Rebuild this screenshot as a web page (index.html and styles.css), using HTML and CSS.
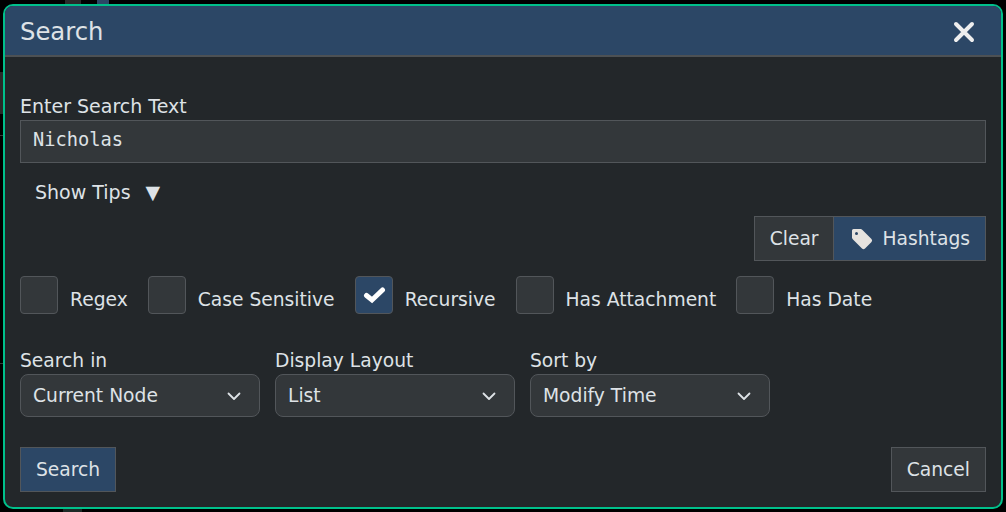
FILE: index.html
```html
<!DOCTYPE html>
<html>
  <head>
    <meta charset="utf-8">
    <title>Search</title>
    <link rel="stylesheet" href="styles.css">
  </head>
  <body>
    <div class="backdrop">
      <span class="under under-top-a"></span>
      <span class="under under-top-b"></span>
      <span class="under under-bottom"></span>
      <span class="under under-left"></span>
      <span class="under under-line-a"></span>
      <span class="under under-line-b"></span>
      <div class="dlg">
        <div class="dlg-header">
          <span class="dlg-title">Search</span>
          <svg class="close-icon" width="22" height="22" viewBox="0 0 22 22">
            <path d="M3 3 L19 19 M19 3 L3 19" stroke="#eeeeee" stroke-width="4" stroke-linecap="round" fill="none"/>
          </svg>
        </div>
        <div class="dlg-body">
          <label class="field-label search-label">Enter Search Text</label>
          <input class="search-input" type="text" value="Nicholas">
          <div class="tips">Show Tips <span class="tips-arrow">▼</span></div>
          <div class="tag-row">
            <button type="button" class="btn clear-btn">Clear</button>
            <button type="button" class="btn btn-primary hashtag-btn">
              <svg width="22" height="22" viewBox="0 0 22 22">
                <path d="M1 2.5 Q1 1 2.5 1 L9.5 1 Q10.5 1 11.5 2 L20.5 11 Q21.8 12.5 20.5 14 L14 20.5 Q12.5 21.8 11 20.5 L2 11.5 Q1 10.5 1 9.5 Z M5.5 4 A1.5 1.5 0 1 0 5.5 7 A1.5 1.5 0 1 0 5.5 4 Z" fill="#e6e3df" fill-rule="evenodd"/>
              </svg>
              Hashtags
            </button>
          </div>
          <div class="check-row">
            <div class="check"><span class="check-box"></span><span class="check-text">Regex</span></div>
            <div class="check"><span class="check-box"></span><span class="check-text">Case Sensitive</span></div>
            <div class="check">
              <span class="check-box checked">
                <svg width="24" height="24" viewBox="0 0 24 24">
                  <path d="M4.5 12.5 L10 17 L20.5 7" stroke="#ffffff" stroke-width="5" stroke-linecap="round" fill="none"/>
                </svg>
              </span>
              <span class="check-text">Recursive</span>
            </div>
            <div class="check"><span class="check-box"></span><span class="check-text">Has Attachment</span></div>
            <div class="check"><span class="check-box"></span><span class="check-text">Has Date</span></div>
          </div>
          <div class="select-row">
            <div class="select-col">
              <label class="field-label">Search in</label>
              <div class="select">Current Node
                <svg width="16" height="16" viewBox="0 0 16 16"><path d="M2.5 5.5 L8 11 L13.5 5.5" stroke="#dee2e6" stroke-width="1.8" stroke-linecap="round" stroke-linejoin="round" fill="none"/></svg>
              </div>
            </div>
            <div class="select-col">
              <label class="field-label">Display Layout</label>
              <div class="select">List
                <svg width="16" height="16" viewBox="0 0 16 16"><path d="M2.5 5.5 L8 11 L13.5 5.5" stroke="#dee2e6" stroke-width="1.8" stroke-linecap="round" stroke-linejoin="round" fill="none"/></svg>
              </div>
            </div>
            <div class="select-col">
              <label class="field-label">Sort by</label>
              <div class="select">Modify Time
                <svg width="16" height="16" viewBox="0 0 16 16"><path d="M2.5 5.5 L8 11 L13.5 5.5" stroke="#dee2e6" stroke-width="1.8" stroke-linecap="round" stroke-linejoin="round" fill="none"/></svg>
              </div>
            </div>
          </div>
          <div class="footer-row">
            <button type="button" class="btn btn-primary">Search</button>
            <button type="button" class="btn">Cancel</button>
          </div>
        </div>
      </div>
    </div>
  </body>
</html>
```

FILE: styles.css
```css
* {
  box-sizing: border-box;
}

html, body {
  margin: 0;
  height: 100%;
}

body {
  background: #000;
  color: #dee2e6;
  font-family: "DejaVu Sans", sans-serif;
  font-size: 18.7px;
}

.backdrop {
  position: relative;
  height: 100%;
  padding: 4px 3px 3px 3px;
}

/* bits of the page behind the dialog, seen round its edge */
.under {
  position: absolute;
}

.under-top-a {
  top: 0;
  left: 65px;
  width: 16px;
  height: 4px;
  background: #2a2a2a;
}

.under-top-b {
  top: 0;
  left: 97px;
  width: 12px;
  height: 4px;
  background: #2c4766;
}

.under-bottom {
  bottom: 0;
  left: 63px;
  width: 19px;
  height: 4px;
  background: #1c2a27;
}

.under-left {
  top: 72px;
  left: 0;
  width: 3px;
  height: 42px;
  background: #2a2a2a;
}

.under-line-a {
  top: 135px;
  left: 0;
  width: 3px;
  height: 1px;
  background: #3a3a3a;
}

.under-line-b {
  top: 363px;
  left: 0;
  width: 3px;
  height: 1px;
  background: #3a3a3a;
}

.dlg {
  position: relative;
  height: 505px;
  background: #23272a;
  border: 2px solid #00c08b;
  border-radius: 10px;
  overflow: hidden;
}

.dlg-header {
  height: 51px;
  background: #2c4766;
  border-bottom: 2px solid #4d5154;
  display: flex;
  align-items: center;
  justify-content: space-between;
  padding: 2px 26px 0 15px;
}

.dlg-title {
  font-size: 24.3px;
}

.close-icon {
  display: block;
}

.dlg-body {
  padding: 37px 15px 0 15px;
}

.field-label {
  display: block;
  line-height: 24px;
  height: 25px;
}

.search-label {
  font-size: 19px;
}

.search-input {
  display: block;
  width: 100%;
  height: 43px;
  margin-top: 1px;
  padding: 0 12px 4px 12px;
  background: #33373a;
  border: 1px solid #52565a;
  color: #dee2e6;
  font-family: "DejaVu Sans Mono", monospace;
  font-size: 18.7px;
  outline: none;
}

.tips {
  padding: 17px 0 1px 15px;
  line-height: 24px;
  font-size: 19px;
}

.tips-arrow {
  margin-left: 9px;
}

.tag-row {
  display: flex;
  justify-content: flex-end;
  margin-top: 11px;
}

.btn {
  height: 45px;
  padding: 0 15px;
  background: #33373a;
  border: 1px solid #52565a;
  color: #dee2e6;
  font-family: "DejaVu Sans", sans-serif;
  font-size: 18.7px;
}

.btn-primary {
  background: #2c4766;
}

.clear-btn {
  border-right: none;
  padding-right: 14px;
}

.hashtag-btn {
  display: flex;
  align-items: center;
  gap: 10px;
  padding-left: 17px;
}

.check-row {
  display: flex;
  gap: 20px;
  margin-top: 15px;
  height: 50px;
}

.check {
  display: flex;
  align-items: flex-start;
  line-height: 24px;
}

.check-box {
  width: 38px;
  height: 38px;
  margin-right: 12px;
  background: #33373a;
  border: 1px solid #52565a;
  border-radius: 4px;
  display: flex;
  align-items: center;
  justify-content: center;
}

.check-box.checked {
  background: #2c4766;
}

.check-text {
  margin-top: 12px;
}

.select-row {
  display: flex;
  gap: 15px;
  margin-top: 23px;
}

.select-col {
  width: 240px;
}

.select {
  height: 43px;
  padding: 0 17px 0 12px;
  background: #33373a;
  border: 1px solid #52565a;
  border-radius: 8px;
  display: flex;
  align-items: center;
  justify-content: space-between;
}

.footer-row {
  display: flex;
  justify-content: space-between;
  margin-top: 30px;
}
```
